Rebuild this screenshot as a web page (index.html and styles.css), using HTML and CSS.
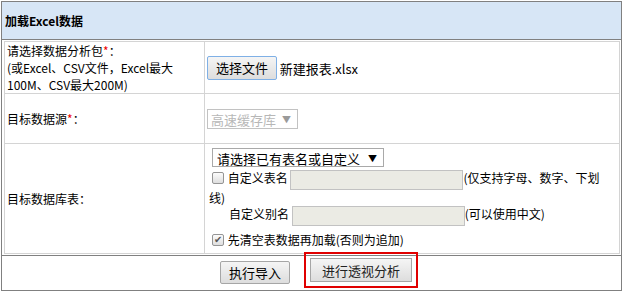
FILE: index.html
```html
<!DOCTYPE html>
<html lang="zh-CN">
  <head>
    <meta charset="UTF-8" />
    <meta name="viewport" content="width=device-width, initial-scale=1.0" />
    <title>加载Excel数据</title>
    <link rel="stylesheet" href="styles.css">
  </head>
  <body>
    <div class="panel">
      <div class="panel-head">加载Excel数据</div>
      <table class="form">
        <tr class="row-file">
          <td class="label">请选择数据分析包<span class="req">*</span>：<br />(或Excel、CSV文件，Excel最大100M、CSV最大200M)</td>
          <td class="field">
            <button class="btn btn-file">选择文件</button> <span class="file-name">新建报表.xlsx</span>
          </td>
        </tr>
        <tr class="row-source">
          <td class="label">目标数据源<span class="req">*</span>：</td>
          <td class="field">
            <span class="sel-wrap sel-disabled">
              <select class="sel sel-source" disabled>
                <option>高速缓存库</option>
              </select>
            </span>
          </td>
        </tr>
        <tr class="row-table">
          <td class="label">目标数据库表：</td>
          <td class="field field-table">
            <div class="line line-sel">
              <span class="sel-wrap">
                <select class="sel sel-table">
                  <option>请选择已有表名或自定义</option>
                </select>
              </span>
            </div>
            <div class="line">
              <input type="checkbox" class="chk" /> 自定义表名 <input type="text" class="txt" disabled />(仅支持字母、数字、下划线)
            </div>
            <div class="line line-alias">
              自定义别名 <input type="text" class="txt" disabled />(可以使用中文)
            </div>
            <div class="line line-clear">
              <input type="checkbox" class="chk" checked /> 先清空表数据再加载(否则为追加)
            </div>
          </td>
        </tr>
      </table>
      <div class="panel-foot">
        <button class="btn btn-run">执行导入</button>
        <button class="btn btn-pivot">进行透视分析</button>
      </div>
    </div>
  </body>
</html>
```

FILE: styles.css
```css
body {
  margin: 0;
  font-family: "Noto Sans CJK SC", "Liberation Sans", sans-serif;
  font-size: 12px;
  line-height: 17px;
  color: #000;
}
.panel {
  margin: 1px 0 0 1px;
  width: 619px;
  border: 1px solid #808080;
}
.panel-head {
  height: 37px;
  line-height: 37px;
  padding-left: 3px;
  background-color: #d7e6f6;
  border-bottom: 1px solid #808080;
  font-weight: bold;
}
.form {
  margin: 1px 1px 1px 2px;
  width: 616px;
  border-collapse: collapse;
  border: 1px solid #d4d4d4;
}
.form td {
  border: 1px solid #d4d4d4;
  padding: 0 2px;
  vertical-align: middle;
}
.form .label {
  width: 195px;
}
.req {
  color: #e00;
}
.row-file td {
  height: 50px;
}
.row-source td {
  height: 49px;
}
.row-table td {
  height: 107px;
}
.field-table {
  padding: 2px 16px 0 4px !important;
  vertical-align: top !important;
}
.btn {
  font-family: inherit;
  font-size: 13px;
  height: 23px;
  padding: 0 8px;
  color: #000;
  border: 1px solid #a6a6a6;
  border-radius: 2px;
  background: linear-gradient(#f5f5f5, #dddddd);
  cursor: pointer;
}
.btn-file {
  height: 24px;
  margin: 0;
  border-color: #7fb0e6;
  vertical-align: middle;
}
.file-name {
  font-size: 13px;
  vertical-align: middle;
}
.sel-wrap {
  position: relative;
  display: inline-block;
  vertical-align: middle;
}
.sel-wrap::after {
  content: "▼";
  position: absolute;
  right: 7px;
  top: 1px;
  font-size: 9px;
  color: #000;
  pointer-events: none;
}
.sel {
  -webkit-appearance: none;
  appearance: none;
  font-family: inherit;
  font-size: 13px;
  margin: 0;
  padding: 0 4px;
  border: 1px solid #a9a9a9;
  border-radius: 0;
  background-color: #fff;
  color: #000;
}
.sel-source {
  width: 91px;
  height: 20px;
  padding-left: 3px;
  color: #9a9a9a;
}
.sel-disabled::after {
  color: #9a9a9a;
  top: 2px;
}
.sel-table {
  width: 172px;
  height: 19px;
}
.line-sel .sel-wrap {
  margin-left: 3px;
}
.line {
  line-height: 12px;
}
.line-sel {
  line-height: 19px;
}
.chk {
  -webkit-appearance: none;
  appearance: none;
  position: relative;
  width: 12px;
  height: 12px;
  margin: 0 1px 0 3px;
  border: 1px solid #959595;
  border-radius: 2px;
  background: linear-gradient(#fcfcfc, #dedede);
  vertical-align: -1px;
}
.chk:checked::after {
  content: "✔";
  position: absolute;
  left: 1px;
  top: -2px;
  font-size: 10px;
  line-height: 14px;
  color: #555;
}
.txt {
  width: 171px;
  height: 18px;
  margin: 2px 0;
  padding: 0;
  border: 1px solid #c2c2c2;
  background-color: #ebebe4;
  vertical-align: middle;
}
.line-alias {
  padding-left: 20px;
}
.line-clear {
  padding-top: 5px;
  line-height: 14px;
}
.panel-foot {
  display: flex;
  justify-content: center;
  align-items: flex-start;
  gap: 20px;
  height: 34px;
  padding-left: 9px;
  border-top: 1px solid #808080;
}
.btn-run {
  margin-top: 5px;
}
.btn-pivot {
  height: 24px;
  margin-top: 2px;
  padding: 0 11px;
  color: #222;
  border-radius: 0;
  outline: 2px solid #e00000;
  outline-offset: 4px;
}
```
